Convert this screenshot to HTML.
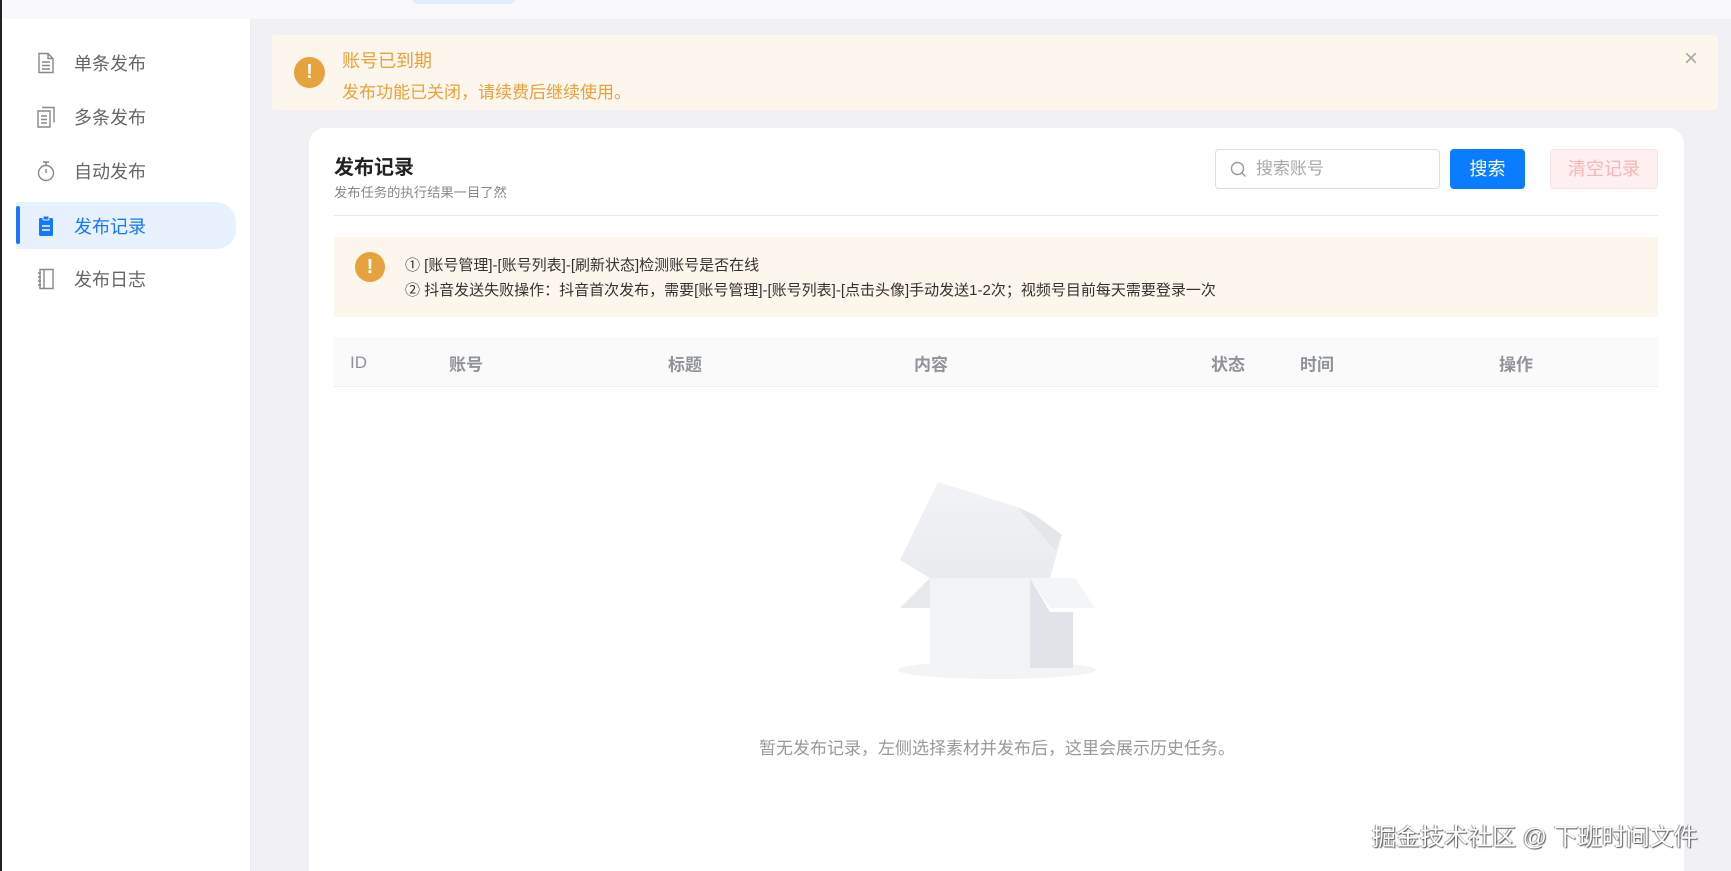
<!DOCTYPE html>
<html style="width:1731px;height:871px;overflow:hidden"><head><meta charset="utf-8"><style>
*{margin:0;padding:0;box-sizing:border-box}
body{width:1731px;height:871px;overflow:hidden;background:#f1f1f5;font-family:"Liberation Sans","Noto Sans CJK SC",sans-serif;position:relative}
.top{position:absolute;left:0;top:0;width:1731px;height:19px;background:#f9f9fb}
.pill{position:absolute;left:412px;top:-6px;width:103px;height:10px;border-radius:6px;background:#e3eefb}
.side{position:absolute;left:0;top:19px;width:251px;height:852px;background:#fff;border-right:1px solid #ececf0}
.edge{position:absolute;left:0;top:0;width:2px;height:871px;background:#222}
.mi{position:absolute;left:16px;width:220px;height:47px;display:flex;align-items:center;font-size:18px;color:#666}
.mi svg{margin-left:20px;margin-right:18px}
.mi.act{background:#e8f2fe;border-radius:0 20px 20px 0;color:#1677ff}
.mi.act:before{content:"";position:absolute;left:0;top:4px;width:4px;height:38px;background:#1677ff;border-radius:2px}
.banner{position:absolute;left:272px;top:35px;width:1446px;height:75px;background:#fdf6ec;border-radius:4px}
.ic{position:absolute;border-radius:50%;background:#e6a23c;color:#fff;font-weight:bold;text-align:center}
.card{position:absolute;left:309px;top:128px;width:1375px;height:743px;background:#fff;border-radius:16px 16px 0 0}
.th{position:absolute;top:363px;transform:translateY(-50%);font-size:17px;font-weight:bold;color:#909399}
</style></head><body>
<div class="top"><div class="pill"></div></div>
<div class="side">
<div class="mi" style="top:20px"><svg width="20" height="22" viewBox="0 0 20 22" fill="none" stroke="#888" stroke-width="1.4"><path d="M3 1.5h9l5 5v14H3z M12 1.5v5h5 M6 10h8 M6 13.5h8 M6 17h8"/></svg>单条发布</div>
<div class="mi" style="top:74px"><svg width="20" height="22" viewBox="0 0 20 22" fill="none" stroke="#888" stroke-width="1.4"><path d="M6 1.5h12v15 M2 5h12v16H2z M5 10h6 M5 13.5h6 M5 17h6"/></svg>多条发布</div>
<div class="mi" style="top:128px"><svg width="20" height="22" viewBox="0 0 20 22" fill="none" stroke="#888" stroke-width="1.4"><circle cx="10" cy="13" r="7.5"/><path d="M7 2h6 M10 2v3 M10 9v4"/></svg>自动发布</div>
<div class="mi act" style="top:183px"><svg width="20" height="22" viewBox="0 0 20 22"><rect x="3" y="3" width="14" height="18" rx="1.5" fill="#1677ff"/><rect x="7" y="1" width="6" height="4" rx="1" fill="#1677ff" stroke="#e8f2fe"/><path d="M6 11h8 M6 15h8" stroke="#fff" stroke-width="1.6"/></svg>发布记录</div>
<div class="mi" style="top:236px"><svg width="20" height="22" viewBox="0 0 20 22" fill="none" stroke="#888" stroke-width="1.4"><path d="M4 1.5h13v19H4z M8 1.5v19 M2 5h3 M2 9h3 M2 13h3 M2 17h3"/></svg>发布日志</div>
</div>
<div class="edge"></div>
<div class="banner">
<div class="ic" style="left:22px;top:22px;width:31px;height:31px;line-height:31px;font-size:20px">!</div>
<div style="position:absolute;left:70px;top:12px;font-size:18px;color:#e6a23c">账号已到期</div>
<div style="position:absolute;left:70px;top:43px;font-size:17px;color:#e6a23c">发布功能已关闭，请续费后继续使用。</div>
<div style="position:absolute;left:1412px;top:10px;font-size:24px;color:#aaa;font-weight:300">×</div>
</div>
<div class="card">
<div style="position:absolute;left:25px;top:23px;font-size:20px;font-weight:bold;color:#222">发布记录</div>
<div style="position:absolute;left:25px;top:54px;font-size:13.3px;color:#888">发布任务的执行结果一目了然</div>
<div style="position:absolute;left:906px;top:21px;width:225px;height:40px;border:1px solid #dcdfe6;border-radius:4px;font-size:17px;color:#aaa;line-height:38px;padding-left:40px">搜索账号
<svg style="position:absolute;left:14px;top:11px" width="17" height="17" viewBox="0 0 17 17" fill="none" stroke="#999" stroke-width="1.4"><circle cx="7.5" cy="7.5" r="6"/><path d="M12 12l3.5 3.5"/></svg></div>
<div style="position:absolute;left:1141px;top:21px;width:75px;height:40px;background:#0a7cff;border-radius:4px;color:#fff;font-size:18px;text-align:center;line-height:40px">搜索</div>
<div style="position:absolute;left:1241px;top:21px;width:108px;height:40px;background:#fef0f0;border:1px solid #fde2e2;border-radius:4px;color:#f7b5b5;font-size:18px;text-align:center;line-height:38px">清空记录</div>
<div style="position:absolute;left:25px;top:87px;width:1324px;height:1px;background:#e8e8ec"></div>
<div style="position:absolute;left:25px;top:109px;width:1324px;height:80px;background:#fdf6ec;border-radius:3px">
<div class="ic" style="left:21px;top:15px;width:30px;height:30px;line-height:30px;font-size:20px">!</div>
<div style="position:absolute;left:71px;top:17px;font-size:15px;color:#333">① [账号管理]-[账号列表]-[刷新状态]检测账号是否在线</div>
<div style="position:absolute;left:71px;top:42px;font-size:15px;color:#333">② 抖音发送失败操作：抖音首次发布，需要[账号管理]-[账号列表]-[点击头像]手动发送1-2次；视频号目前每天需要登录一次</div>
</div>
<div style="position:absolute;left:25px;top:209px;width:1324px;height:50px;background:#fafafa;border-bottom:1px solid #ebeef5"></div>
</div>
<div class="th" style="left:350px;font-weight:normal">ID</div>
<div class="th" style="left:449px">账号</div>
<div class="th" style="left:668px">标题</div>
<div class="th" style="left:914px">内容</div>
<div class="th" style="left:1211px">状态</div>
<div class="th" style="left:1300px">时间</div>
<div class="th" style="left:1499px">操作</div>
<svg style="position:absolute;left:890px;top:470px" width="220" height="215" viewBox="890 470 220 215">
<defs><linearGradient id="g" x1="0" y1="0" x2="0" y2="1"><stop offset="0" stop-color="#f2f3f6"/><stop offset="1" stop-color="#e9ebef"/></linearGradient></defs>
<ellipse cx="997" cy="670" rx="99" ry="9" fill="#f3f4f6"/>
<polygon points="900,608 930,578 930,608" fill="#e6e8ec"/>
<polygon points="1030,578 1075,578 1095,608 1050,608" fill="#f4f5f7"/>
<polygon points="900,560 938,482 1017,507 1062,535 1050,578 930,578" fill="url(#g)"/>
<polygon points="1017,507 1035,515 1062,535 1055,550" fill="#e4e6ea"/>
<rect x="930" y="578" width="100" height="90" fill="#f2f3f5"/>
<polygon points="1030,578 1050,612 1073,612 1073,668 1030,668" fill="#e1e3e8"/>
</svg>
<div style="position:absolute;left:0;width:1994px;top:734px;text-align:center;font-size:17px;color:#999">暂无发布记录，左侧选择素材并发布后，这里会展示历史任务。</div>
<div style="position:absolute;left:1372px;top:817px;font-size:24px;color:#fff;text-shadow:1px 1px 1px #555,-1px 0 1px #888;white-space:nowrap">掘金技术社区 @ 下班时间文件</div>
</body></html>
